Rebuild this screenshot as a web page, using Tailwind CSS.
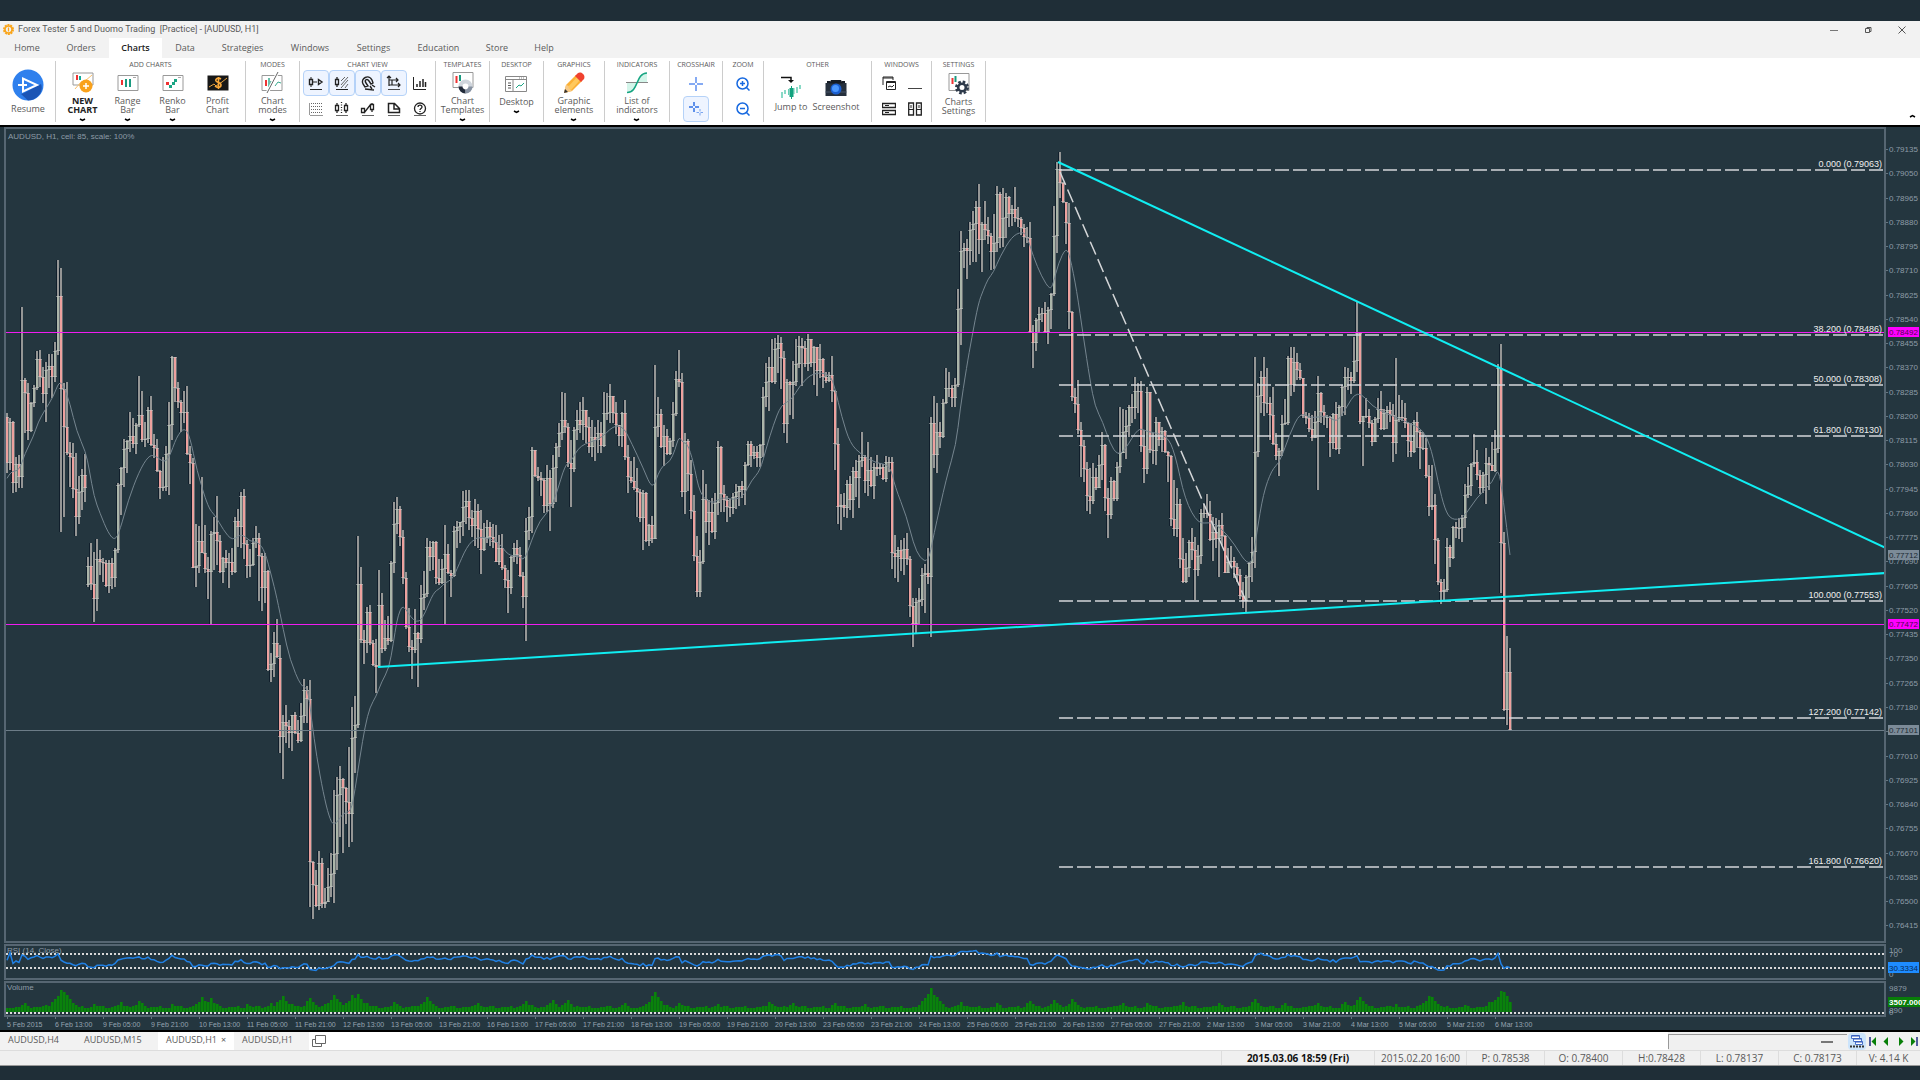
<!DOCTYPE html>
<html lang="en">
<head>
<meta charset="utf-8">
<title>Forex Tester 5 and Duomo Trading</title>
<script src="https://cdn.jsdelivr.net/npm/@tailwindcss/browser@4"></script>
</head>
<body class="h-screen overflow-hidden bg-[#1f2e37] font-['Open_Sans',sans-serif] text-[#5a5a5a]">
<div class="flex h-full flex-col pt-[21px]">

<!-- Title bar -->
<header class="bg-[#f2f2f2]">
  <div class="flex h-[17px] items-center pl-[3px] pr-[14px]">
    <svg class="size-[11px]" viewBox="0 0 22 22"><circle cx="11" cy="11" r="9" fill="none" stroke="#f9a51b" stroke-width="4" stroke-dasharray="4 1.6"/><circle cx="11" cy="11" r="7" fill="none" stroke="#f9a51b" stroke-width="3.4"/><path d="M11 7v8" stroke="#f9a51b" stroke-width="2.5"/></svg>
    <h1 class="ml-1 whitespace-pre font-[Roboto,sans-serif] text-[9px] leading-none">Forex Tester 5 and Duomo Trading  [Practice] - [AUDUSD, H1]</h1>
    <div class="ml-auto flex items-center gap-[26px]">
      <button aria-label="Minimize"><svg class="size-2" viewBox="0 0 8 8"><path d="M0 4.5h8" stroke="#777"/></svg></button>
      <button aria-label="Restore"><svg class="size-2" viewBox="0 0 8 8" fill="none" stroke="#555"><path d="M1.500 2.500h4v4h-4zM3 2.500v-1h4v4h-1"/></svg></button>
      <button aria-label="Close"><svg class="size-2" viewBox="0 0 8 8"><path d="M.5.5l7 7M7.500.5l-7 7" stroke="#555"/></svg></button>
    </div>
  </div>
  <nav class="flex h-5 pl-px text-center text-[9px] leading-5">
    <a href="#" class="w-[52px]">Home</a><a href="#" class="w-14">Orders</a><a href="#" class="w-[53px] bg-white font-semibold text-[#222]">Charts</a><a href="#" class="w-[46px]">Data</a><a href="#" class="w-[69px]">Strategies</a><a href="#" class="w-[66px]">Windows</a><a href="#" class="w-[61px]">Settings</a><a href="#" class="w-[69px]">Education</a><a href="#" class="w-12">Store</a><a href="#" class="w-[46px]">Help</a>
  </nav>
</header>

<!-- Ribbon -->
<div class="flex h-[67px] bg-white py-[3px] pl-px text-[9px] leading-[9px]">
  <section class="flex w-[55px] flex-col items-center border-r border-[#ccc] pt-2">
    <button class="flex flex-col items-center gap-[3px]"><svg class="size-8" viewBox="0 0 32 32"><circle cx="16" cy="16" r="15.500" fill="#2f80ed"/><path d="M12 24l17-9c3 7-3 16-13 16.500L9 25z" fill="#1b55b5"/><path d="M11 9.500v13l14-6.500zM6 16h9" fill="none" stroke="#fff" stroke-width="2"/></svg>Resume</button>
  </section>

  <section class="flex w-[190px] flex-col items-center border-r border-[#ccc]">
    <h2 class="h-2 text-[7px] leading-[7px]">ADD CHARTS</h2>
    <div class="flex pr-px">
      <button class="flex w-[45px] flex-col items-center font-bold text-[#222]"><svg class="h-[28px] w-[22px]" viewBox="0 0 22 28"><path d="M1 5h20v12H1z" fill="#fff" stroke="#999"/><path d="M5 7v5" stroke="#e33" stroke-width="2"/><path d="M8 8v4" stroke="#1a9" stroke-width="2"/><path d="M3 21l6-7 4-1 7-6" fill="none" stroke="#fbc06a"/><circle cx="14" cy="18" r="6.500" fill="#f9a11b"/><path d="M14 15v6M11 18h6" stroke="#fff" stroke-width="1.500"/></svg>NEW<br>CHART<svg class="mt-1 h-[4px] w-[7px]" viewBox="0 0 7 4"><path d="M1 1l2.500 1.500L6 1" fill="none" stroke="#000" stroke-width="1.500"/></svg></button>
      <button class="flex w-[45px] flex-col items-center"><svg class="h-[28px] w-[22px]" viewBox="0 0 22 28"><path d="M1 7.500h20v15H1z" fill="#fff" stroke="#999"/><path d="M16 9.500h3" stroke="#aaa"/><path d="M5 12v5" stroke="#e33" stroke-width="2"/><path d="M9 11v8M13 11v8" stroke="#1a9a80" stroke-width="2"/></svg>Range<br>Bar<svg class="mt-1 h-[4px] w-[7px]" viewBox="0 0 7 4"><path d="M1 1l2.500 1.500L6 1" fill="none" stroke="#000" stroke-width="1.500"/></svg></button>
      <button class="flex w-[45px] flex-col items-center"><svg class="h-[28px] w-[22px]" viewBox="0 0 22 28"><path d="M1 7.500h20v15H1z" fill="#fff" stroke="#999"/><path d="M16 9.500h3" stroke="#aaa"/><path d="M4 14h3v3H4z" fill="#e33"/><path d="M7 17h3v3H7zM10 14h3v3h-3zM12 11h3v3h-3z" fill="#1aa584"/></svg>Renko<br>Bar<svg class="mt-1 h-[4px] w-[7px]" viewBox="0 0 7 4"><path d="M1 1l2.500 1.500L6 1" fill="none" stroke="#000" stroke-width="1.500"/></svg></button>
      <button class="flex w-[45px] flex-col items-center"><svg class="h-[28px] w-[22px]" viewBox="0 0 22 28"><path d="M.5 7.500h21v15H.5z" fill="#171717"/><path d="M2 19l5-3 2 2 6-4 5-4" fill="none" stroke="#e9a23b"/><path d="M14 11c-3-2-6 0-5 2s5 1 5 4-4 3-6 1M11.500 9v12" fill="none" stroke="#f9a83a" stroke-width="1.600"/></svg>Profit<br>Chart</button>
    </div>
  </section>

  <section class="flex w-[54px] flex-col items-center border-r border-[#ccc]">
    <h2 class="h-2 text-[7px] leading-[7px]">MODES</h2>
    <button class="flex flex-col items-center"><svg class="h-[28px] w-[22px]" viewBox="0 0 22 28"><path d="M1 7.500h20v15H1z" fill="#fff" stroke="#999"/><path d="M5 12v6" stroke="#e33" stroke-width="2"/><path d="M8 10v9M10 13v6" stroke="#3aa98e" stroke-width="1.500"/><path d="M14 18l3-4 3 1" fill="none" stroke="#3aa98e"/><path d="M17 4L6 25" stroke="#fff" stroke-width="3"/><path d="M17 4L6 25" stroke="#666"/></svg>Chart<br>modes<svg class="mt-1 h-[4px] w-[7px]" viewBox="0 0 7 4"><path d="M1 1l2.500 1.500L6 1" fill="none" stroke="#000" stroke-width="1.500"/></svg></button>
  </section>

  <section class="flex w-[136px] flex-col items-center border-r border-[#ccc]">
    <h2 class="h-[10px] text-[7px] leading-[7px]">CHART VIEW</h2>
    <div class="grid grid-cols-5">
      <button aria-label="Auto scroll" class="flex size-[26px] items-center justify-center rounded-sm border border-[#b5d2f8] bg-[#eef4ff]"><svg class="size-4" viewBox="0 0 16 16" fill="none" stroke="#222"><path d="M3 2v2M3 10v2M5 7h4M2 14.500h12" /><path d="M1.500 4.500h3v5h-3zM10.500 4.500v5l3.500-2.500z" stroke-width="1.400"/></svg></button>
      <button aria-label="Chart shift" class="flex size-[26px] items-center justify-center rounded-sm border border-[#b5d2f8] bg-[#eef4ff]"><svg class="size-4" viewBox="0 0 16 16" fill="none" stroke="#222"><path d="M3 2v2M3 10v2M1.500 4.500h3v5h-3z" stroke-width="1.300"/><path d="M2 14.500h12"/><path d="M7 6l4-4M7 10l7-8M7 13l7-8M11 13l3-4" stroke="#666"/></svg></button>
      <button aria-label="Magnet" class="flex size-[26px] items-center justify-center rounded-sm border border-[#b5d2f8] bg-[#eef4ff]"><svg class="size-4" viewBox="0 0 16 16" fill="none" stroke="#222"><path d="M5 12L3 9c-3-6 6-10 9-4l1 3-2 1-2-3C7 3 4 5 6 8l2 3zM10 11l2 3M12 10l3 2M5 14l9 1" stroke-width="1.400"/></svg></button>
      <button aria-label="Fixed scale" class="flex size-[26px] items-center justify-center rounded-sm border border-[#b5d2f8] bg-[#eef4ff]"><svg class="size-4" viewBox="0 0 16 16" fill="none" stroke="#222" stroke-width="1.200"><path d="M3 1v10M1 3l2-2 2 2M3 5h9M10 3l2 2-2 2M6 5v5h8M12 8l2 2-2 2M3 10h3"/><path d="M2 14.500h12" stroke-width=".8"/></svg></button>
      <button aria-label="Volumes" class="flex size-[26px] items-center justify-center"><svg class="size-4" viewBox="0 0 16 16" fill="none" stroke="#222"><path d="M1.500 2v12.500H14"/><path d="M5 12V9M8 12V6M11 12V4M13.500 12V7" stroke-width="1.500"/></svg></button>
      <button aria-label="Grid" class="flex size-[26px] items-center justify-center"><svg class="size-[14px]" viewBox="0 0 14 14" fill="none" stroke="#666" stroke-dasharray="1 1"><path d="M2 1.500h12M2 4.500h12M2 7.500h12M2 10.500h12"/><path d="M1 13.500h13M.5 1v12" stroke-dasharray="none" stroke="#999"/></svg></button>
      <button aria-label="Period separators" class="flex size-[26px] items-center justify-center"><svg class="size-4" viewBox="0 0 16 16" fill="none" stroke="#222" stroke-width="1.300"><path d="M3 2v2M3 10v2M1.500 4.500h3v5h-3zM12 2v2M12 10v2M10.500 4.500h3v5h-3z"/><path d="M7.500 1v12" stroke-dasharray="1 1.500"/><path d="M2 14.500h12" stroke-width=".7"/></svg></button>
      <button aria-label="Trade lines" class="flex size-[26px] items-center justify-center"><svg class="size-4" viewBox="0 0 16 16" fill="none" stroke="#222" stroke-width="1.300"><path d="M1.500 7.500h3v4h-3zM10.500 3.500h3v5h-3zM12 2v1.500M12 8.500V11M4 12l7-9"/><path d="M2 14.500h12" stroke-width=".7"/></svg></button>
      <button aria-label="Data window" class="flex size-[26px] items-center justify-center"><svg class="size-4" viewBox="0 0 16 16" fill="none" stroke="#222" stroke-width="1.500"><path d="M2.500 2.500h6l5 5v4h-11zM8 2.500V8h5.500"/><path d="M2 14.500h12" stroke-width=".7"/></svg></button>
      <button aria-label="Hints" class="flex size-[26px] items-center justify-center"><svg class="size-4" viewBox="0 0 16 16" fill="none" stroke="#222" stroke-width="1.300"><circle cx="8" cy="7.500" r="5.500"/><path d="M6 6c0-2.500 4-2.500 4 0 0 1.500-2 1.500-2 3M8 10v1"/><path d="M2 14.500h12" stroke-width=".7"/></svg></button>
    </div>
  </section>

  <section class="flex w-[54px] flex-col items-center border-r border-[#ccc]">
    <h2 class="h-2 text-[7px] leading-[7px]">TEMPLATES</h2>
    <button class="flex flex-col items-center"><svg class="h-[28px] w-[22px]" viewBox="0 0 22 28"><path d="M1 4.500h20v15H1z" fill="#fff" stroke="#999"/><path d="M4.500 8v7" stroke="#e33" stroke-width="2"/><path d="M8 7v6" stroke="#1a9a80" stroke-width="2"/><circle cx="13.500" cy="18.500" r="5" fill="#fff" stroke="#cfd5dc" stroke-width="4"/><path d="M8.500 18.500a5 5 0 0 0 5 5" fill="none" stroke="#222b3a" stroke-width="4"/><path d="M13.500 23.500a5 5 0 0 0 5-5" fill="none" stroke="#8792a2" stroke-width="4"/></svg>Chart<br>Templates<svg class="mt-1 h-[4px] w-[7px]" viewBox="0 0 7 4"><path d="M1 1l2.500 1.500L6 1" fill="none" stroke="#000" stroke-width="1.500"/></svg></button>
  </section>

  <section class="flex w-[54px] flex-col items-center border-r border-[#ccc]">
    <h2 class="h-2 text-[7px] leading-[7px]">DESKTOP</h2>
    <button class="flex flex-col items-center"><svg class="h-[28px] w-[22px]" viewBox="0 0 22 28"><path d="M.5 7.500h21v15H.5zM.5 10.500h21M8 10.500v12" fill="#fff" stroke="#888"/><path d="M14 9h6" stroke="#888" stroke-dasharray="1 1"/><path d="M3 14h3M3 16.500h3M3 19h3" stroke="#555"/><path d="M11 19l3-3 2 1 3-3" fill="none" stroke="#1aa584"/></svg>Desktop<svg class="mt-1 h-[4px] w-[7px]" viewBox="0 0 7 4"><path d="M1 1l2.500 1.500L6 1" fill="none" stroke="#000" stroke-width="1.500"/></svg></button>
  </section>

  <section class="flex w-[61px] flex-col items-center border-r border-[#ccc]">
    <h2 class="h-2 text-[7px] leading-[7px]">GRAPHICS</h2>
    <button class="flex flex-col items-center"><svg class="h-[28px] w-[22px]" viewBox="0 0 22 28"><path d="M1 25l2-8L13 7l6 6L9 23z" fill="#fbb034"/><path d="M3 17l3 1 1 3 2 2-8 2z" fill="#f7c987"/><path d="M5 19l9-10 3 3-9 10z" fill="#ffc95c"/><path d="M12 8l3-3c3-2 8 2 6 6l-3 3z" fill="#f0412f"/><path d="M1 25l1-4 3 3z" fill="#333"/></svg>Graphic<br>elements<svg class="mt-1 h-[4px] w-[7px]" viewBox="0 0 7 4"><path d="M1 1l2.500 1.500L6 1" fill="none" stroke="#000" stroke-width="1.500"/></svg></button>
  </section>

  <section class="flex w-[65px] flex-col items-center border-r border-[#ccc]">
    <h2 class="h-2 text-[7px] leading-[7px]">INDICATORS</h2>
    <button class="flex flex-col items-center"><svg class="h-[28px] w-[22px]" viewBox="0 0 22 28"><path d="M11 14.500c1-6 3-9 10-9v9zM1 14.500h10c-1 6-3 9-10 9z" fill="#d4f5ea"/><path d="M0 14.500h22" stroke="#888"/><path d="M1 24.500c12 0 8-19 20-19.500" fill="none" stroke="#17a582" stroke-width="1.500"/></svg>List of<br>indicators<svg class="mt-1 h-[4px] w-[7px]" viewBox="0 0 7 4"><path d="M1 1l2.500 1.500L6 1" fill="none" stroke="#000" stroke-width="1.500"/></svg></button>
  </section>

  <section class="flex w-[53px] flex-col items-center border-r border-[#ccc]">
    <h2 class="h-[10px] text-[7px] leading-[7px]">CROSSHAIR</h2>
    <button aria-label="Crosshair" class="flex size-[26px] items-center justify-center"><svg class="size-[14px]" viewBox="0 0 14 14"><path d="M7 0v6M7 8v6M0 7h6M8 7h6" stroke="#5d8ff0" stroke-width="1.500"/></svg></button>
    <button aria-label="Synchronized crosshair" class="flex size-[26px] items-center justify-center rounded-sm border border-[#b5d2f8] bg-[#eef4ff]"><svg class="size-[14px]" viewBox="0 0 14 14"><path d="M5 0v4M5 6v4M0 5h4M6 5h4" stroke="#2f6fe4" stroke-width="1.500"/><path d="M11 7v2.500M11 11v2.500M7.500 10.500H10M11.500 10.500H14" stroke="#7ba5ee"/></svg></button>
  </section>

  <section class="flex w-[41px] flex-col items-center border-r border-[#ccc]">
    <h2 class="h-[10px] text-[7px] leading-[7px]">ZOOM</h2>
    <button aria-label="Zoom in" class="flex size-[26px] items-center justify-center"><svg class="size-[14px]" viewBox="0 0 14 14" fill="none" stroke="#1769e0" stroke-width="1.500"><circle cx="6.500" cy="6.500" r="5.500"/><path d="M10.500 10.500l3 3M4 6.500h5M6.500 4v5"/></svg></button>
    <button aria-label="Zoom out" class="flex size-[26px] items-center justify-center"><svg class="size-[14px]" viewBox="0 0 14 14" fill="none" stroke="#1769e0" stroke-width="1.500"><circle cx="6.500" cy="6.500" r="5.500"/><path d="M10.500 10.500l3 3M4 6.500h5"/></svg></button>
  </section>

  <section class="flex w-[108px] flex-col items-center border-r border-[#ccc]">
    <h2 class="h-3 text-[7px] leading-[7px]">OTHER</h2>
    <div class="flex pr-2">
      <button class="flex w-[45px] flex-col items-center"><svg class="h-[29px] w-[22px]" viewBox="0 0 22 29"><path d="M1 4.500h10v4" fill="none" stroke="#111" stroke-width="1.500"/><path d="M8 7h6l-3 3z" fill="#111"/><path d="M2 19v6M5 17v4M17 14v6M20 12v4" stroke="#63cdb4" stroke-width="1.500"/><path d="M8.500 16v6M14 15v6" stroke="#63cdb4"/><path d="M9.500 15h4v9h-4z" fill="#12a37f"/><path d="M11.500 13v13" stroke="#12a37f"/></svg>Jump to</button>
      <button class="flex w-[45px] flex-col items-center"><svg class="h-[29px] w-[22px]" viewBox="0 0 22 29"><path d="M.5 10h21v13H.5z" fill="#26303d"/><path d="M6 7h10l2 3.500H4z" fill="#151b24"/><path d="M2 9h3M17 9h3" stroke="#151b24" stroke-width="2"/><path d="M.5 19h21" stroke="#465468"/><circle cx="11" cy="16" r="5.500" fill="#1b5fd0"/><circle cx="10.500" cy="15.500" r="3.500" fill="#4a97ff"/></svg>Screenshot</button>
    </div>
  </section>

  <section class="flex w-[60px] flex-col items-center border-r border-[#ccc]">
    <h2 class="h-[10px] text-[7px] leading-[7px]">WINDOWS</h2>
    <div class="grid grid-cols-2 text-[#222]">
      <button aria-label="Cascade" class="flex size-[26px] items-center justify-center"><svg class="size-[14px]" viewBox="0 0 14 14" fill="none" stroke="currentColor"><path d="M1 9V1h10v3M1 2h10M4.500 5.500h9v8h-9zM4 6.500h10M6 11l2-1 2 1 2-2"/></svg></button>
      <button aria-label="Minimize all" class="flex size-[26px] items-center justify-center"><svg class="size-[14px]" viewBox="0 0 14 14"><path d="M0 12.500h14" stroke="#444"/></svg></button>
      <button aria-label="Tile horizontally" class="flex size-[26px] items-center justify-center"><svg class="size-[14px]" viewBox="0 0 14 14" fill="none" stroke="currentColor"><path d="M.5 1.500h13v4H.5zM.5 8.500h13v4H.5z" stroke-width="1.300"/><path d="M3 3.500h4M3 10.500h4"/></svg></button>
      <button aria-label="Tile vertically" class="flex size-[26px] items-center justify-center"><svg class="size-[14px]" viewBox="0 0 14 14" fill="none" stroke="currentColor"><path d="M.7 1h4.800v12H.7zM8.500 1h4.800v12H8.500z" stroke-width="1.300"/><path d="M1 7.500h4M9 7.500h4M3 3v3M11 3v3"/></svg></button>
    </div>
  </section>

  <section class="flex w-[54px] flex-col items-center border-r border-[#ccc]">
    <h2 class="h-2 text-[7px] leading-[7px]">SETTINGS</h2>
    <button class="flex flex-col items-center"><svg class="h-[28px] w-[22px]" viewBox="0 0 22 28"><path d="M1 4.500h20v17H1z" fill="#fff" stroke="#999"/><path d="M4.500 9v6" stroke="#e33" stroke-width="2"/><path d="M7.500 7v6" stroke="#1a9a80" stroke-width="2"/><circle cx="14" cy="18.500" r="5.500" fill="none" stroke="#2e3a4a" stroke-width="3" stroke-dasharray="2.500 1.820"/><circle cx="14" cy="18.500" r="3.800" fill="#fff" stroke="#2e3a4a" stroke-width="2.600"/></svg>Charts<br>Settings</button>
  </section>

  <button aria-label="Collapse ribbon" class="ml-auto mr-1 self-end pb-1"><svg class="h-1 w-[7px]" viewBox="0 0 7 4"><path d="M1 3l2.500-1.500L6 3" fill="none" stroke="#000" stroke-width="1.500"/></svg></button>
</div>

<!-- Chart workspace -->
<main class="flex min-h-0 flex-1 flex-col border-y-2 border-black bg-[#24363f] pl-1 font-['Liberation_Sans',sans-serif]">
  <div class="flex min-h-0 flex-1">
    <div class="relative min-w-0 flex-1 border-2 border-[#566672]">
      <svg id="price" class="absolute inset-0 size-full" role="img" aria-label="AUDUSD hourly candles"></svg>
    </div>
    <div class="relative w-[34px]"><svg id="priceAxis" class="absolute inset-0 size-full"></svg></div>
  </div>
  <div class="mt-px flex h-[36px]">
    <div class="relative min-w-0 flex-1 border-2 border-[#566672]"><svg id="rsi" class="absolute inset-0 size-full"></svg></div>
    <div class="relative w-[34px]"><svg id="rsiAxis" class="absolute inset-0 size-full"></svg></div>
  </div>
  <div class="mt-px flex h-[36px]">
    <div class="relative min-w-0 flex-1 border-2 border-[#566672]"><svg id="volume" class="absolute inset-0 size-full"></svg></div>
    <div class="relative w-[34px]"><svg id="volumeAxis" class="absolute inset-0 size-full"></svg></div>
  </div>
  <svg id="timeAxis" class="h-[13px] w-full"></svg>
</main>

<!-- Chart tabs -->
<div class="flex h-[18px] items-stretch bg-white text-[9px] leading-[15px]">
  <button class="flex w-[78px] bg-[#f2f2f2] pl-2">AUDUSD,H4</button>
  <button class="flex w-20 bg-[#f2f2f2] pl-[6px]">AUDUSD,M15</button>
  <button class="flex w-[76px] gap-1 bg-white pl-2">AUDUSD,H1 <span>×</span></button>
  <button class="flex w-[75px] bg-[#f2f2f2] pl-2">AUDUSD,H1</button>
  <button aria-label="New tab" class="pl-[3px]"><svg class="h-3 w-[14px]" viewBox="0 0 14 12" fill="none" stroke="#666"><path d="M3.500.5h10v8h-10zM3.500 4.500h-3v7h9v-3"/></svg></button>
  <div class="ml-auto flex items-center gap-px bg-[#f0f0f0]">
    <div class="flex h-[15px] w-[179px] items-center justify-end border-l border-t border-[#999] pr-[14px]"><button aria-label="Scroll chart" class="h-[2px] w-3 bg-[#777]"></button></div>
    <button aria-label="Chart history" class="flex h-[17px] w-[18px] items-center justify-center rounded-sm bg-[#cce4fb]"><svg class="size-[14px]" viewBox="0 0 14 14" fill="#fff" stroke="#4a72c8"><path d="M1.500 1.500h8v3h-8zM3.500 4.500h8v3h-8zM5.500 7.500h7v3h-7z"/><path d="M1.500 2h8M3.500 5h8M5.500 8h7" stroke="#2a50b8"/><path d="M0 12.500h14" stroke="#333" stroke-width="2" stroke-dasharray="2 1"/></svg></button>
    <div class="flex items-center gap-[5px] px-[2px] text-[#087f08]">
      <button aria-label="First"><svg class="h-[9px] w-2" viewBox="0 0 8 9"><path d="M1 0v9" stroke="#1c2b80" stroke-width="1.500"/><path d="M7 0v9L2.500 4.500z" fill="currentColor"/></svg></button>
      <button aria-label="Back"><svg class="h-[9px] w-2" viewBox="0 0 8 9"><path d="M6 0v9L1.500 4.500z" fill="currentColor"/></svg></button>
      <button aria-label="Forward" class="ml-[2px]"><svg class="h-[9px] w-2" viewBox="0 0 8 9"><path d="M2 0v9l4.500-4.500z" fill="currentColor"/></svg></button>
      <button aria-label="Last"><svg class="h-[9px] w-2" viewBox="0 0 8 9"><path d="M7 0v9" stroke="#1c2b80" stroke-width="1.500"/><path d="M1 0v9l4.500-4.500z" fill="currentColor"/></svg></button>
    </div>
  </div>
</div>

<!-- Status bar -->
<footer class="mb-[14px] flex h-4 justify-end border-b border-t border-b-[#999] border-t-[#ddd] bg-[#f0f0f0] text-center text-[10px] leading-[14px]">
  <div class="w-[153px] border-l border-[#ddd] font-bold text-[#111]">2015.03.06 18:59 (Fri)</div>
  <div class="w-[92px] border-l border-[#ddd]">2015.02.20 16:00</div>
  <div class="w-[78px] border-l border-[#ddd]">P: 0.78538</div>
  <div class="w-[78px] border-l border-[#ddd]">O: 0.78400</div>
  <div class="w-[78px] border-l border-[#ddd]">H:0.78428</div>
  <div class="w-[78px] border-l border-[#ddd]">L: 0.78137</div>
  <div class="w-[78px] border-l border-[#ddd]">C: 0.78173</div>
  <div class="w-[64px] border-l border-[#ddd]">V: 4.14 K</div>
</footer>
</div>

<script>
// Candle blocks: base level, open of the first bar, then close, high, low per bar
// in thirds of a pixel below the base. Each bar opens at the previous close.
const blocks = [
[240,530,`670 520 700,545 535 690,730 543 760,672 650 755,712 645 745,420 200 745,460 415 578,572 430 600,490 487 575,445 435 500,356 332 450,412 330 440,463 380 488,390 365 545,378 342 445,412 342 475,334 305 425,168 60 345,448 85 875,560 430 830,640 427 645,652 605 740,748 610 775,832 640 887,757 708 852,705 687 810,745 643 785,978 950 1040 1035,1032 908 1050,1078 935 1147,957 898 1112,965 930 1005,970 955 1025,1037 960 1040,970 960 1060,1013 955 1048,930 925 1040,735 730 938,685 680 825,627 597 740,604 600 700,588 517 637,613 535 625,556 548 643,524 407 560,600 452 605,597 545 620,511 500 610,614 468 618,624 582 655,693 598 697,744 690 778,742 650 752,642 617 752,556 487 765,351 347 600,445 350 485,487 425 505,518 480 575,516 453 550,643 438 645,670 618 732,983 655 985,978 853 1040,902 858 1000,938 712 940,987 855 998,995 950 1077,883 873 1152,876 832 990,903 767 975,995 885 1000,955 950 1028,968 930 985,965 940 1043,995 925 1005,843 832 998,860 808 920,768 757 925,913 748 957,977 900 1013,975 927 1010,910 893 978,895 857 925,948 880 1083,1045 940 1112,993 940 1090,1290 990 1293,1272 1240 1325,1210 1175 1312,1252 1137 1255`],
[460,594,`832 555 880,787 765 957,798 735 850,818 780 863,765 765 873,820 755 823,843 780 850,768 730 845,690 658 790,716 678 788,1206 660 1340,1275 1203 1378,1337 1230 1340,1210 1172 1350,1333 1195 1345,1325 1285 1345,1280 1225 1325,1243 1180 1310,1183 990 1330,1006 952 1230,957 917 1130,984 955 1178,1027 980 1093,1063 860 1160,835 740 1147,795 708 940,372 227 803,540 320 550,548 510 613,457 440 580,548 435 555,615 540 618,622 538 700,436 330 622,568 400 580,535 480 573,542 468 555,310 303 547,192 125 340,147 110 222,232 138 258,353 210 372,502 337 508,560 443 575,570 540 657,518 447 580,536 515 682,414 375 548,402 332 450,262 235 410,290 243 333,247 242 330,355 243 372,370 297 375,328 298 373,282 195 492,340 253 343,347 330 410,213 197 352,200 183 265,186 185 250,140 93 228,123 90 192,173 90 210,197 150 232,152 117 258,207 133 263,270 150 342,235 190 272,200 180 250,232 187 258,247 192 263,305 195 307,265 225 315,325 223 330,360 315 385,385 330 458,290 288 403,263 248 307,285 240 313,348 260 352,410 337 445,213 173 542,172 142 240,-30 -40 218,47 -30 50,55 20 62,60 35 108,137 55 158,55 15 157,132 30 213,25 -15 145,-40 -50 125,-80 -110 -10,-120 -204 -60,-100 -200 -80,10 -110 20,28 -60 140,-90 -100 35,-120 -150 -60,-105 -175 -80,-150 -190 -60,-100 -150 -50,-40 -130 -20,-70 -120 -10,-60 -100 3,-80 -120 -20`],
[310,370,`408 337 430,308 247 412,310 250 330,258 222 340,308 257 340,345 275 372,378 345 408,308 307 412,440 270 450,502 405 548,512 452 520,533 442 540,547 475 620,625 537 637,548 540 720,692 545 695,645 643 708,688 617 700,350 165 688,312 260 380,410 297 413,378 345 468,432 357 435,392 385 435,312 277 410,208 183 318,215 120 230,545 190 560,393 368 612,493 388 542,603 450 627,737 555 752,845 677 860,757 720 860,568 480 762,637 523 670,605 570 705,665 565 670,578 548 688,410 392 615,552 407 605,570 525 605,592 557 635,595 568 622,560 550 612,545 522 598,528 530 588,540 513 563,465 457 585,402 392 468,437 393 470,425 407 447,445 408 470,405 402 470,262 232 440,217 160 290,170 142 303,215 88 220,118 83 223,100 75 190,145 82 237,343 122 370,215 207 398,225 213 315,215 153 327,163 88 228,108 78 175,115 85 227,162 92 172,88 72 182,160 86 170,112 107 225,182 130 257,147 103 205,200 145 233,213 185 220,195 185 217,243 138 275,403 240 480,592 355 643,585 552 660,595 550 622,523 510 625,570 497 600,483 472 625,503 450 560,453 435 595,440 367 470,513 435 548,480 395 557,527 442 530,472 460 567,478 435 497,470 460 495,507 463 510,455 438 515,457 440 485,730 440 778,742 675 803,720 710 815,748 690 782,718 685 795,748 668 765,888 737 920,942 865 1010,875 863 970,870 835 942,795 775 888,790 763 908,800 715 822,340 320 980`],
[140,850,`945 768 985,877 790 1000,892 845 925,790 778 893,745 685 793,743 697 770,775 735 800,735 715 802,508 448 740,333 273 615,325 310 385,332 297 418,270 247 375,253 213 365,202 183 367,300 133 343,253 245 397,270 182 300,287 232 312,335 280 390,308 222 388,163 137 335,293 155 325,235 145 322,172 158 295,222 168 260,208 195 258,235 142 245,237 200 260,263 230 285,290 253 322,295 262 310,575 245 577,610 555 685,540 535 633,522 500 577,520 505 545,577 485 580,510 500 613,463 460 567,288 197 467,88 65 338,130 35 175,187 125 190,250 185 312,515 188 567,770 513 782,793 745 818,870 720 882,918 847 1010,988 900 1025,1068 965 1112,1082 985 1123,1012 970 1092,1043 983 1050,975 945 1045,915 877 1020,1075 912 1112,1125 1045 1195,1022 1010 1138,1078 1020 1083,980 965 1083,938 800 998,875 807 940,858 810 957,802 795 892,803 763 848,753 710 837,752 730 818,918 723 937,988 870 1030,755 740 1003,930 755 940,933 880 973,847 832 975,900 845 917,873 862 935,935 870 940,947 933 1027,1138 945 1158,1167 1020 1187,1093 1045 1190,1258 1077 1283,1327 1195 1330,1285 1240 1330,1207 1200 1310,1230 1165 1260,1290 1190 1380,1247 1215 1308,1118 1107 1273,1120 1092 1135,1122 1062 1135,1200 1083 1203,1175 1130 1262,1198 1135 1225,1155 1140 1312,1187 1118 1215,1298 1185 1300,1265 1225 1300,1262 1218 1280,1280 1252 1315,1305 1270 1325,1368 1288 1378,1382 1325 1405,1312 1305 1418,1270 1265 1373,1235 1190 1327,935 652 1285,767 728 950,710 693 820,790 652 828`],
[280,370,`368 265 400,405 350 480,493 320 495,527 460 540,512 505 587,432 405 528,428 357 435,235 228 435,315 200 347,247 200 335,270 218 300,295 250 300,408 293 415,415 397 432,448 400 455,475 405 483,427 393 475,340 288 630,397 337 430,410 375 435,412 405 443,490 407 530,402 400 508,508 367 510,382 375 523,320 315 408,290 260 405,290 263 330,302 275 342,243 170 308,158 65 275,425 155 432,408 408 558,408 355 415,430 387 445,485 420 498,418 410 487,387 355 430,447 333 450,400 387 450,390 378 447,405 365 425,490 373 547,420 233 523,412 345 425,415 360 423,430 370 443,483 425 532,517 428 532,425 420 520,455 395 503,503 450 567,505 455 510,588 475 595,680 555 708,675 555 690,780 643 852,905 775 915,935 897 973,930 897 962,802 775 935,833 795 860,742 738 837,743 725 775,745 715 778,715 705 787,645 613 743,617 560 655,553 550 648,545 463 560,585 510 600,623 570 643,585 575 640,550 505 672,555 530 630,573 485 573,507 450 577,265 253 520,790 193 940,1290 757 1293,1175 1067 1335,1350 1105 1350`]];
const bars = [];
for (const [base, first, text] of blocks) {
  let open = first;
  for (const item of text.split(',')) {
    const [c, h, l, gapOpen] = item.trim().split(' ').map(Number);
    if (gapOpen) open = gapOpen;
    const y = v => Math.round(base + v / 3);
    bars.push({ x: 7 + 3 * bars.length, o: y(open), c: y(c), h: y(h), l: y(l) });
    open = c;
  }
}

const NS = 'http://www.w3.org/2000/svg';
// Returns a drawing function for one panel; dx, dy move workspace coordinates to the panel
function panel(id, dx, dy) {
  const g = document.createElementNS(NS, 'g');
  g.setAttribute('transform', `translate(${-dx} ${-dy})`);
  document.getElementById(id).append(g);
  return (tag, attrs, text) => {
    const e = document.createElementNS(NS, tag);
    for (const k in attrs) e.setAttribute(k, attrs[k]);
    if (text) e.textContent = text;
    g.append(e);
    return e;
  };
}
const line = (d, x1, y1, x2, y2, stroke, w = 1, more = {}) => d('line', { x1, y1, x2, y2, stroke, 'stroke-width': w, ...more });
const rect = (d, x, y, width, height, fill) => d('rect', { x, y, width, height, fill });
const label = (d, x, y, t, fill = '#8e9ca7', size = 8, more = {}) => d('text', { x, y, fill, 'font-size': size, ...more }, t);

// Price panel
const p = panel('price', 6, 129);
let edges = '', wicks = '', up = '', down = '', shade = '', caps = '';
for (const b of bars) {
  const t = Math.min(b.o, b.c), n = Math.max(1, Math.abs(b.o - b.c));
  edges += `M${b.x - 2} ${b.h}h1V${b.l}h-1z`;
  wicks += `M${b.x - 1} ${b.h}h2V${b.l}h-2z`;
  if (b.c > b.o) down += `M${b.x - 1} ${t}h2v${n}h-2z`; else up += `M${b.x - 1} ${t}h2v${n}h-2z`;
  shade += `M${b.x + 1} ${t}h1v${n}h-1z`;
  caps += `M${b.x - 2} ${t}h4v1h-4zM${b.x - 2} ${t + n - 1}h4v1h-4z`;
}
p('path', { d: edges, fill: '#101e2b' });
p('path', { d: wicks, fill: '#959695' });
p('path', { d: shade, fill: '#6c7275' });
p('path', { d: up, fill: '#abb5a9' });
p('path', { d: down, fill: '#eda19e' });
p('path', { d: caps, fill: '#c9cac8', opacity: .5 });

// Moving average
const ma = [
[0,240,'21,715 33,693 57,693 75,640 100,590 115,545 135,510 160,470 177,425 190,435 210,490 230,575 257,635 268,690 282,770 300,820 325,880 345,902 360,870 385,780 417,695 445,648 465,645 490,668 507,655 530,590 553,562 570,590 590,690 625,805 645,825 670,870 697,903 725,880 750,905 775,905 795,935'],
[240,460,'95,350 110,410 130,510 150,600 183,680 203,682 215,780 230,890 250,1000 267,1070 282,1100 310,1058 333,1055 345,990 360,890 375,800 390,740 408,710 425,665 447,625 460,550 470,485 480,450 490,437 505,460 520,480 538,487 555,460 580,398 600,385 615,368 635,360 650,330 680,260 710,230 745,235 775,245 805,287 835,287 853,303 875,240 900,180 930,150 950,100 975,15 993,5'],
[600,310,'-60,405 0,388 40,347 70,350 95,400 130,475 157,540 175,490 190,465 210,455 225,420 237,378 250,400 262,400 280,455 300,555 337,583 365,560 400,570 430,560 455,510 480,483 500,410 520,345 543,285 575,270 600,225 640,187 690,192 705,235 725,320 750,400 785,435 830,460 870,465 885,530 920,620 940,700 960,745 985,757 1000,680 1040,500 1068,405 1080,300 1100,170'],
[920,140,'155,595 175,490 190,450 205,415 220,398 240,350 275,290 305,275 320,285 340,350 365,410 390,450 400,430 415,370 438,322 450,350 470,450 490,590 510,720 525,800 548,845 570,910 592,945 615,930 655,862 680,875 740,885 765,940 795,1080 835,1153 870,1145 905,1165 945,1215 975,1265 997,1270 1010,1180 1030,1060 1055,990 1080,965 1110,880 1140,818'],
[1230,280,'237,412 265,412 290,405 320,428 345,390 382,328 430,382 470,400 540,430 580,450 605,510 625,610 645,690 665,720 700,715 740,652 790,605 805,560 820,660 840,825']]
.flatMap(([x0, y0, s]) => s.split(' ').map(q => { const [x, y] = q.split(','); return [x0 + x / 3, y0 + y / 3]; }));
let curve = `M${ma[0]}`;
for (let i = 1; i < ma.length - 1; i++) curve += `Q${ma[i]} ${(ma[i][0] + ma[i + 1][0]) / 2},${(ma[i][1] + ma[i + 1][1]) / 2}`;
curve += `L${ma[ma.length - 1]}`;
p('path', { d: curve, fill: 'none', stroke: '#75858f' });

// Levels and trend lines
line(p, 0, 730.5, '101%', 730.5, '#6c7c87');
for (const y of [332.5, 624.5]) line(p, 0, y, '101%', y, '#f01cf0');
const fibs = [[170, '0.000 (0.79063)'], [335, '38.200 (0.78486)'], [385, '50.000 (0.78308)'], [436, '61.800 (0.78130)'], [601, '100.000 (0.77553)'], [718, '127.200 (0.77142)'], [867, '161.800 (0.76620)']];
for (const [y, t] of fibs) {
  line(p, 1059, y, '101%', y, '#d4d6da', 1.5, { 'stroke-dasharray': '14 4' });
  label(p, '100%', y - 3, t, '#eee', 9, { 'text-anchor': 'end', transform: 'translate(4 0)' });
}
line(p, 1060, 172, 1246, 601, '#d4d6d8', 1.5, { 'stroke-dasharray': '14 5' });
line(p, 1058, 162, 1886, 548, '#10eef2', 2);
line(p, 378, 667, 1886, 573, '#10eef2', 2);
label(p, 8, 139, 'AUDUSD, H1, cell: 85, scale: 100%');

// Price scale
const a = panel('priceAxis', 1886, 127);
for (let i = 0; i <= 32; i++) {
  const y = Math.round(149 + i * 24.26);
  line(a, 1886, y + .5, 1888, y + .5, '#66757f');
  label(a, 1889, y + 3, (0.79135 - i * 0.00085).toFixed(5));
}
for (const [y, t, bg, fg] of [[332, '0.78492', '#f0f', '#4d064d'], [555, '0.77712', '#7c8b98', '#1b2a33'], [624, '0.77472', '#f0f', '#4d064d'], [730, '0.77101', '#7c8b98', '#1b2a33']]) {
  rect(a, 1888, y - 5, 31, 10, bg);
  label(a, 1889, y + 3, t, fg);
}

// RSI(14)
const r = panel('rsi', 6, 946);
for (const y of [954, 968]) line(r, 6, y, '101%', y, '#d8d8d8', 2, { 'stroke-dasharray': '2 2' });
label(r, 7, 953, 'RSI (14, Close)');
let gain = 2.2, loss = 2, rsiPath = '';
bars.forEach((b, i) => {
  const d = i ? bars[i - 1].c - b.c : 0;
  gain = (gain * 13 + Math.max(d, 0)) / 14;
  loss = (loss * 13 + Math.max(-d, 0)) / 14;
  rsiPath += `${i ? 'L' : 'M'}${b.x} ${(954 + (70 - 100 * gain / (gain + loss)) * .35).toFixed(1)}`;
});
r('path', { d: rsiPath, fill: 'none', stroke: '#2080e4', 'stroke-width': 1.5 });
const ra = panel('rsiAxis', 1886, 944);
label(ra, 1889, 953, '100'); label(ra, 1889, 957, '70'); label(ra, 1889, 977, '0');
rect(ra, 1888, 962, 31, 11, '#1e8cff');
label(ra, 1889, 971, '30.3334', '#062a58');

// Volume
const v = panel('volume', 6, 983);
const peaks = [[6,9],[13,7],[18,22],[19,20],[20,17],[29,8],[38,10],[44,11],[55,8],[65,15],[68,14],[80,8],[88,9],[92,16],[101,14],[109,17],[115,17],[117,18],[129,10],[140,15],[157,9],[173,11],[182,12],[187,12],[206,9],[216,20],[224,9],[237,8],[254,10],[262,9],[276,9],[286,8],[308,24],[318,10],[330,9],[341,11],[349,12],[355,13],[372,9],[380,9],[392,10],[404,9],[416,13],[426,9],[437,9],[446,10],[451,15],[463,8],[474,16],[475,15],[486,7],[494,10],[498,21],[499,20],[500,16],[501,10]];
let vols = '', volSides = '';
bars.forEach((b, i) => {
  let h = 3.5 + (i * 7919 % 13) / 5;
  for (const [k, q] of peaks) h = Math.max(h, q * Math.exp(-Math.abs(i - k) / 4) - (i * 31 % 5) / 2 * (i !== k));
  if (i > 498) h = peaks[peaks.length - 502 + i][1];
  const top = 1012 - Math.round(h);
  vols += `M${b.x - 1} ${top}h2V1012h-2z`;
  volSides += `M${b.x + 1} ${top}h1V1012h-1z`;
});
v('path', { d: vols, fill: '#0a820c' });
v('path', { d: volSides, fill: '#0c6a15' });
line(v, 6, 1013, '101%', 1013, '#dcdcdc', 2, { 'stroke-dasharray': '2 2' });
label(v, 7, 990, 'Volume');
const va = panel('volumeAxis', 1886, 981);
label(va, 1889, 991, '9879'); label(va, 1889, 1013, '890'); label(va, 1889, 1015, '0');
rect(va, 1888, 997, 32, 10, '#087d08');
label(va, 1889, 1005, '3507.000', '#fff', 8, { 'font-weight': 700 });

// Time scale: one label per 16 bars
const t = panel('timeAxis', 4, 1017);
['5 Feb 2015','6 Feb 13:00','9 Feb 05:00','9 Feb 21:00','10 Feb 13:00','11 Feb 05:00','11 Feb 21:00','12 Feb 13:00','13 Feb 05:00','13 Feb 21:00','16 Feb 13:00','17 Feb 05:00','17 Feb 21:00','18 Feb 13:00','19 Feb 05:00','19 Feb 21:00','20 Feb 13:00','23 Feb 05:00','23 Feb 21:00','24 Feb 13:00','25 Feb 05:00','25 Feb 21:00','26 Feb 13:00','27 Feb 05:00','27 Feb 21:00','2 Mar 13:00','3 Mar 05:00','3 Mar 21:00','4 Mar 13:00','5 Mar 05:00','5 Mar 21:00','6 Mar 13:00'].forEach((s, i) => {
  line(t, 7.5 + 48 * i, 1017, 7.5 + 48 * i, 1019, '#66757f');
  label(t, 7 + 48 * i, 1027, s, '#96a4b0', 7);
});
</script>
</body>
</html>
